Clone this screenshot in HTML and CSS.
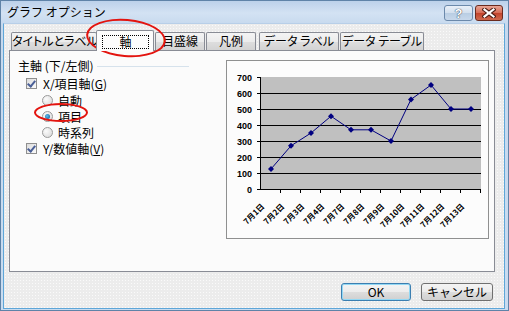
FILE: index.html
```html
<!DOCTYPE html>
<html lang="ja">
<head>
  <meta charset="utf-8">
  <title>グラフ オプション</title>
  <link rel="stylesheet" href="styles.css">
</head>
<body>
  <div class="window">
    <div class="titlebar">
      <span class="title">グラフ オプション</span>
      <div class="caption-buttons">
        <span class="cap-btn cap-help">?</span>
        <span class="cap-btn cap-close">
          <svg width="14" height="10" viewBox="0 0 14 10">
            <path d="M2.5 1.5 L11.5 8.5 M11.5 1.5 L2.5 8.5" stroke="#4b1d14" stroke-width="4.2" stroke-linecap="square"/>
            <path d="M2.5 1.5 L11.5 8.5 M11.5 1.5 L2.5 8.5" stroke="#fff" stroke-width="2.2" stroke-linecap="square"/>
          </svg>
        </span>
      </div>
    </div>

    <div class="client">
      <div class="tabs">
        <div class="tab tab-title">タイトルとラベル</div>
        <div class="tab tab-axis active"><span class="focus">軸</span></div>
        <div class="tab tab-grid">目盛線</div>
        <div class="tab tab-legend">凡例</div>
        <div class="tab tab-label">データ ラベル</div>
        <div class="tab tab-table">データ テーブル</div>
      </div>

      <div class="panel">
        <div class="options">
          <div class="group-title">
            <span>主軸 (下/左側)</span>
            <span class="rule"></span>
          </div>
          <div class="row row-x"><span class="checkbox"></span>X/項目軸(<u>G</u>)</div>
          <div class="row radio-row first"><span class="radio"></span>自動</div>
          <div class="row radio-row"><span class="radio checked"></span>項目</div>
          <div class="row radio-row"><span class="radio"></span>時系列</div>
          <div class="row"><span class="checkbox"></span>Y/数値軸(<u>V</u>)</div>
        </div>

        <div class="preview">
          <svg width="261" height="177" viewBox="0 0 261 177">
            <rect x="34" y="16" width="220" height="112" fill="#c0c0c0"/>
            <g stroke="#000" stroke-width="1">
              <path d="M34 32.5 H254 M34 48.5 H254 M34 64.5 H254 M34 80.5 H254 M34 96.5 H254 M34 112.5 H254"/>
              <path d="M33.5 16 V129 M30 128.5 H254"/>
              <path d="M30 16.5 H34 M30 32.5 H34 M30 48.5 H34 M30 64.5 H34 M30 80.5 H34 M30 96.5 H34 M30 112.5 H34"/>
              <path d="M53.5 128 V132 M73.5 128 V132 M93.5 128 V132 M113.5 128 V132 M133.5 128 V132 M153.5 128 V132 M173.5 128 V132 M193.5 128 V132 M213.5 128 V132 M233.5 128 V132 M253.5 128 V132"/>
            </g>
            <g class="axis-y" text-anchor="end">
              <text x="25" y="19.5">700</text>
              <text x="25" y="35.5">600</text>
              <text x="25" y="51.5">500</text>
              <text x="25" y="67.5">400</text>
              <text x="25" y="83.5">300</text>
              <text x="25" y="99.5">200</text>
              <text x="25" y="115.5">100</text>
              <text x="25" y="131.5">0</text>
            </g>
            <polyline fill="none" stroke="#000080" stroke-width="1"
              points="44,108 64,84.8 84,72 104,55.2 124,68.8 144,68.8 164,80 184,38.4 204,24 224,48 244,48"/>
            <g fill="#000080">
              <path d="M44 105 L47 108 L44 111 L41 108 Z"/>
              <path d="M64 81.8 L67 84.8 L64 87.8 L61 84.8 Z"/>
              <path d="M84 69 L87 72 L84 75 L81 72 Z"/>
              <path d="M104 52.2 L107 55.2 L104 58.2 L101 55.2 Z"/>
              <path d="M124 65.8 L127 68.8 L124 71.8 L121 68.8 Z"/>
              <path d="M144 65.8 L147 68.8 L144 71.8 L141 68.8 Z"/>
              <path d="M164 77 L167 80 L164 83 L161 80 Z"/>
              <path d="M184 35.4 L187 38.4 L184 41.4 L181 38.4 Z"/>
              <path d="M204 21 L207 24 L204 27 L201 24 Z"/>
              <path d="M224 45 L227 48 L224 51 L221 48 Z"/>
              <path d="M244 45 L247 48 L244 51 L241 48 Z"/>
            </g>
            <g class="axis-x" text-anchor="end">
              <text x="38" y="146" transform="rotate(-45 38 146)">7月1日</text>
              <text x="58" y="146" transform="rotate(-45 58 146)">7月2日</text>
              <text x="78" y="146" transform="rotate(-45 78 146)">7月3日</text>
              <text x="98" y="146" transform="rotate(-45 98 146)">7月4日</text>
              <text x="118" y="146" transform="rotate(-45 118 146)">7月7日</text>
              <text x="138" y="146" transform="rotate(-45 138 146)">7月8日</text>
              <text x="158" y="146" transform="rotate(-45 158 146)">7月9日</text>
              <text x="178" y="146" transform="rotate(-45 178 146)">7月10日</text>
              <text x="198" y="146" transform="rotate(-45 198 146)">7月11日</text>
              <text x="218" y="146" transform="rotate(-45 218 146)">7月12日</text>
              <text x="238" y="146" transform="rotate(-45 238 146)">7月13日</text>
            </g>
          </svg>
        </div>
      </div>

      <div class="footer">
        <button class="btn btn-default">OK</button>
        <button class="btn btn-cancel">キャンセル</button>
      </div>
    </div>

    <span class="mark mark-tab"></span>
    <span class="mark mark-item"></span>
  </div>
</body>
</html>
```

FILE: styles.css
```css
* {
  box-sizing: border-box;
}

body {
  margin: 0;
  background: #fff;
  color: #000;
  font-family: "Noto Sans CJK JP", "Noto Sans", sans-serif;
  font-size: 12px;
  font-feature-settings: "palt";
}

.window {
  position: relative;
  display: flex;
  flex-direction: column;
  width: 509px;
  height: 311px;
  padding: 0 3px 1px 2px;
  border: 1px solid #5f83a8;
  background: linear-gradient(#bcd1ea 0, #d3e2f3 12px, #c6d9ee 24px, #c9dcf0);
}

/* title bar */
.titlebar {
  display: flex;
  align-items: flex-start;
  height: 22px;
  padding-left: 4px;
}

.title {
  margin-top: 3px;
  line-height: 16px;
  font-feature-settings: normal;
}

.caption-buttons {
  display: flex;
  gap: 2px;
  margin-left: auto;
  margin-top: 4px;
  margin-right: 2px;
}

.cap-btn {
  display: flex;
  align-items: center;
  justify-content: center;
  height: 16px;
  border: 1px solid #6b89ab;
  border-radius: 3px;
}

.cap-help {
  width: 29px;
  background: linear-gradient(#e9f0f8, #d2dfee 50%, #b9cde3 51%, #c7d8eb);
  color: #fff;
  font-family: "Liberation Sans", sans-serif;
  font-weight: bold;
  font-size: 13px;
  text-shadow: 0 0 1px #2c3e55, 0 0 1px #2c3e55;
}

.cap-close {
  width: 28px;
  border-color: #6a2a1e;
  background: linear-gradient(#e8a595, #d66a54 50%, #c2432b 51%, #cf6a4f);
}

/* client area */
.client {
  flex: 1;
  display: flex;
  flex-direction: column;
  padding: 6px 9px 0 5px;
  border: 1px solid #5ea6d8;
  border-top-color: #b8cfe8;
  background-color: #ececec;
  background-image: radial-gradient(circle, #fafafa 0.6px, transparent 1px);
  background-size: 3px 3px;
}

.tabs {
  display: flex;
  align-items: flex-end;
  height: 20px;
}

.tab {
  position: relative;
  height: 18px;
  border: 1px solid #898c95;
  border-bottom: none;
  border-radius: 2px 2px 0 0;
  background: linear-gradient(#f4f4f4, #ececec 50%, #dedede 51%, #d3d3d3);
  text-align: center;
  line-height: 16px;
  white-space: nowrap;
}

.tab.active {
  z-index: 2;
  height: 21px;
  margin-bottom: -1px;
  padding: 4px 0 0 5px;
  background: #fcfcfc;
}

.focus {
  display: block;
  width: 47px;
  height: 14px;
  border: 1px dotted #000;
  line-height: 12px;
  text-align: center;
}

.tab-title {
  width: 86px;
  margin-left: 2px;
}

.tab-axis {
  width: 58px;
  margin-left: -1px;
}

.tab-grid {
  width: 50px;
  margin-left: 1px;
}

.tab-legend {
  width: 50px;
  margin-left: 1px;
}

.tab-label {
  width: 80px;
  margin-left: 3px;
}

.tab-table {
  width: 84px;
  margin-left: 1px;
}

.panel {
  display: flex;
  align-items: flex-start;
  height: 222px;
  border: 1px solid #898c95;
  background: #fbfbfb;
}

.options {
  padding: 6px 0 0 8px;
}

.group-title {
  display: flex;
  align-items: center;
  height: 16px;
  white-space: nowrap;
}

.rule {
  width: 92px;
  height: 1px;
  margin-left: 3px;
  margin-top: 2px;
  background: #d6e2ec;
}

.row {
  display: flex;
  align-items: center;
  height: 16px;
  padding-left: 8px;
  white-space: nowrap;
}

.row-x {
  margin-top: 2px;
}

.radio-row {
  padding-left: 24px;
}

.radio-row.first {
  margin-top: 1px;
}

.checkbox {
  position: relative;
  width: 11px;
  height: 11px;
  margin-right: 6px;
  border: 1px solid #8f8f8f;
  background: linear-gradient(135deg, #dcdcdc, #fbfbfb);
}

.checkbox::after {
  content: "";
  position: absolute;
  left: 2px;
  top: 0px;
  width: 3px;
  height: 6px;
  border: solid #4a5f97;
  border-width: 0 2px 2px 0;
  transform: rotate(40deg);
}

.radio {
  position: relative;
  width: 11px;
  height: 11px;
  margin-right: 5px;
  border: 1px solid #9a9a9a;
  border-radius: 50%;
  background: radial-gradient(circle at 35% 35%, #fbfbfb, #d6d6d6);
}

.radio.checked::after {
  content: "";
  position: absolute;
  left: 2px;
  top: 2px;
  width: 5px;
  height: 5px;
  border-radius: 50%;
  background: radial-gradient(circle at 40% 40%, #5bc0f0, #0f4f8f);
}

u {
  text-decoration: underline;
}

/* chart preview */
.preview {
  width: 263px;
  height: 179px;
  margin: 9px 5px 0 auto;
  border: 1px solid #8f9090;
  background: #fcfcfc;
}

.preview svg {
  display: block;
}

.axis-y text {
  font-family: "Liberation Sans", sans-serif;
  font-size: 9px;
  font-weight: bold;
}

.axis-x text {
  font-family: "Noto Sans CJK JP", sans-serif;
  font-size: 8px;
  font-weight: bold;
}

/* buttons */
.footer {
  display: flex;
  justify-content: flex-end;
  gap: 10px;
  margin-top: 11px;
  padding-right: 2px;
}

.btn {
  height: 18px;
  padding: 0;
  border: 1px solid #707070;
  border-radius: 3px;
  background: linear-gradient(#f4f4f4, #ececec 50%, #dddddd 51%, #d0d0d0);
  color: #000;
  font-family: inherit;
  font-size: 12px;
  line-height: 14px;
}

.btn-default {
  width: 70px;
  border-color: #3c7fb1;
  box-shadow: inset 0 0 0 1px #93d8f4;
}

.btn-cancel {
  width: 72px;
}

/* red annotation marks */
.mark {
  position: absolute;
  border: 2px solid #e3140f;
  border-radius: 50%;
}

.mark-tab {
  left: 85px;
  top: 18px;
  width: 80px;
  height: 38px;
  transform: rotate(5deg);
}

.mark-item {
  left: 33px;
  top: 102px;
  width: 54px;
  height: 19px;
}
```
